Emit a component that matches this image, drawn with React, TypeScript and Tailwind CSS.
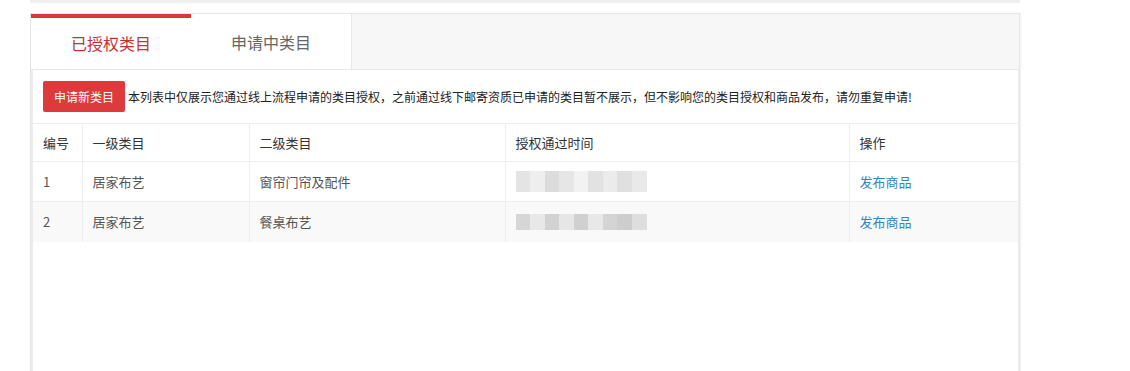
import React from "react";

const rows = [
  { id: 1, first: "居家布艺", second: "窗帘门帘及配件", blur: ["#e4e4e4", "#eeeeee", "#dcdcdc", "#e6e6e6", "#f2f2f2", "#e2e2e2", "#ebebeb", "#e0e0e0", "#e9e9e9"], tall: true },
  { id: 2, first: "居家布艺", second: "餐桌布艺", blur: ["#d6d6d6", "#e8e8e8", "#d2d2d2", "#e6e6e6", "#d0d0d0", "#e8e8e8", "#d4d4d4", "#cdcdcd", "#dedede"], tall: false },
];

function Blurred({ shades, tall }: { shades: string[]; tall: boolean }) {
  return (
    <div className={`flex w-[131px] ${tall ? "h-[21px]" : "h-[16px]"}`}>
      {shades.map((c, i) => (
        <span key={i} className="flex-1" style={{ background: c }} />
      ))}
    </div>
  );
}

export default function App() {
  return (
    <div className="h-[371px] overflow-hidden bg-white font-['Noto_Sans_CJK_SC','Noto_Sans',sans-serif]">
      {/* previous card bottom */}
      <div className="ml-[30px] w-[990px] h-[3px] bg-[#eeeeee]" />

      <div className="mt-[10px] ml-[30px] w-[990px] h-[400px] border border-[#e6e6e6] shadow-[1px_0_2px_rgba(0,0,0,0.06)] bg-white flex flex-col">
        {/* Tabs */}
        <div className="flex h-[56px] bg-[#f7f7f7] border-b border-[#e8e8e8]">
          <div className="w-[160px] bg-white border-t-4 border-[#d9383a] flex items-center justify-center text-[16px] text-[#c62f33] pb-[2px]">
            已授权类目
          </div>
          <div className="w-[161px] bg-white border-r border-[#e8e8e8] flex items-center justify-center text-[16px] text-[#666]">
            申请中类目
          </div>
        </div>

        {/* Content */}
        <div className="flex-1 border-l-2 border-r border-[#ececec]">
          <div className="flex items-center h-[53px] pl-[10px]">
            <button className="h-[31px] w-[82px] rounded-[2px] bg-[#dc3a3c] text-white text-[12px]">
              申请新类目
            </button>
            <span className="ml-[3px] text-[12px] text-[#222]">
              本列表中仅展示您通过线上流程申请的类目授权，之前通过线下邮寄资质已申请的类目暂不展示，但不影响您的类目授权和商品发布，请勿重复申请!
            </span>
          </div>

          <table className="w-full table-fixed border-collapse text-[13px]">
            <colgroup>
              <col className="w-[49px]" />
              <col className="w-[167px]" />
              <col className="w-[256px]" />
              <col className="w-[344px]" />
              <col />
            </colgroup>
            <thead>
              <tr className="h-[38px] border-t border-[#eeeeee] text-[#333]">
                {["编号", "一级类目", "二级类目", "授权通过时间", "操作"].map((h, i) => (
                  <th key={h} className={`text-left font-normal pl-[10px] ${i > 0 ? "border-l border-[#eeeeee]" : ""}`}>
                    {h}
                  </th>
                ))}
              </tr>
            </thead>
            <tbody>
              {rows.map((r) => (
                <tr key={r.id} className={`h-[40px] border-t border-[#eeeeee] ${r.id % 2 === 0 ? "bg-[#f9f9f9]" : "bg-white"}`}>
                  <td className="pl-[10px] text-[#555]">{r.id}</td>
                  <td className="pl-[10px] border-l border-[#eeeeee] text-[#555]">{r.first}</td>
                  <td className="pl-[10px] border-l border-[#eeeeee] text-[#555]">{r.second}</td>
                  <td className="pl-[10px] border-l border-[#eeeeee]">
                    <Blurred shades={r.blur} tall={r.tall} />
                  </td>
                  <td className="pl-[10px] border-l border-[#eeeeee]">
                    <a className="text-[#2f86c4]">发布商品</a>
                  </td>
                </tr>
              ))}
            </tbody>
          </table>
        </div>
      </div>
    </div>
  );
}
